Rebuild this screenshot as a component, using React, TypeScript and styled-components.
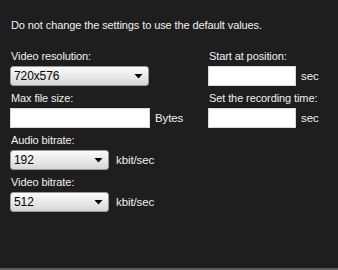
import React from "react";
import styled, { createGlobalStyle } from "styled-components";

const Global = createGlobalStyle`
  html, body { margin: 0; padding: 0; background: #1e1e1e; }
  body { width: 338px; height: 270px; overflow: hidden; }
`;

const Page = styled.div`
  box-sizing: border-box;
  width: 338px;
  height: 270px;
  background: #1e1e1e;
  border-bottom: 2px solid #5a5a5a;
  padding: 17px 0 0 10px;
  font-family: "Liberation Sans", Arial, sans-serif;
  font-size: 11px;
  letter-spacing: -0.1px;
  color: #f0f0f0;
`;

const Note = styled.div`
  line-height: 16px;
  padding-left: 1px;
  margin-bottom: 15px;
`;

const Columns = styled.div`
  display: flex;
`;

const Column = styled.div<{ $w?: number }>`
  display: flex;
  flex-direction: column;
  width: ${(p) => (p.$w ? `${p.$w}px` : "auto")};
`;

const Field = styled.div`
  display: flex;
  flex-direction: column;
  margin-bottom: 4px;
`;

const Label = styled.div`
  line-height: 16px;
  padding-left: 1px;
  margin-bottom: 2px;
  white-space: nowrap;
`;

const Row = styled.div<{ $gap: number }>`
  display: flex;
  align-items: center;
  gap: ${(p) => p.$gap}px;
`;

const SelectBox = styled.div<{ $w: number }>`
  box-sizing: border-box;
  width: ${(p) => p.$w}px;
  height: 20px;
  border: 1px solid #9a9a9a;
  border-radius: 3px;
  background: linear-gradient(#fbfbfb, #e6e6e6 60%, #d6d6d6);
  color: #000;
  font-size: 12px;
  display: flex;
  align-items: center;
  justify-content: space-between;
  padding: 0 5px 0 3px;
`;

const TextBox = styled.div<{ $w: number }>`
  box-sizing: border-box;
  width: ${(p) => p.$w}px;
  height: 20px;
  background: #fff;
  border: 1px solid #d8d8d8;
`;

const Unit = styled.span`
  line-height: 16px;
  font-size: 11.5px;
  white-space: nowrap;
`;

const Arrow = () => (
  <svg width="9" height="6" viewBox="0 0 9 6">
    <path d="M0.5 1h8L4.5 5.5z" fill="#000" />
  </svg>
);

const Select = ({ w, value }: { w: number; value: string }) => (
  <SelectBox $w={w}>
    <span>{value}</span>
    <Arrow />
  </SelectBox>
);

export default function App() {
  return (
    <Page>
      <Global />
      <Note>Do not change the settings to use the default values.</Note>
      <Columns>
        <Column $w={198}>
          <Field>
            <Label>Video resolution:</Label>
            <Select w={139} value="720x576" />
          </Field>
          <Field>
            <Label>Max file size:</Label>
            <Row $gap={5}>
              <TextBox $w={140} />
              <Unit>Bytes</Unit>
            </Row>
          </Field>
          <Field>
            <Label>Audio bitrate:</Label>
            <Row $gap={7}>
              <Select w={99} value="192" />
              <Unit>kbit/sec</Unit>
            </Row>
          </Field>
          <Field>
            <Label>Video bitrate:</Label>
            <Row $gap={7}>
              <Select w={99} value="512" />
              <Unit>kbit/sec</Unit>
            </Row>
          </Field>
        </Column>
        <Column>
          <Field>
            <Label>Start at position:</Label>
            <Row $gap={5}>
              <TextBox $w={88} />
              <Unit>sec</Unit>
            </Row>
          </Field>
          <Field>
            <Label>Set the recording time:</Label>
            <Row $gap={5}>
              <TextBox $w={88} />
              <Unit>sec</Unit>
            </Row>
          </Field>
        </Column>
      </Columns>
    </Page>
  );
}
